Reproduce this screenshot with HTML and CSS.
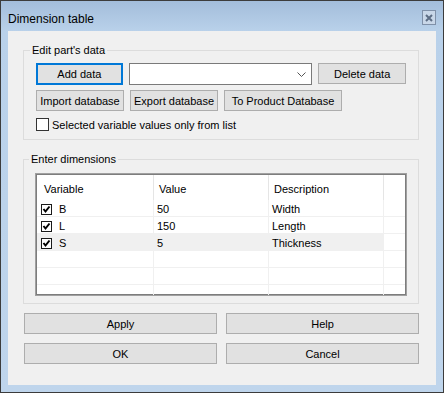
FILE: index.html
```html
<!DOCTYPE html>
<html lang="en">
<head>
  <meta charset="UTF-8">
  <title>Dimension table</title>
  <link rel="stylesheet" href="styles.css">
</head>
<body>
  <div class="window">
    <div class="titlebar">
      <span class="title">Dimension table</span>
      <span class="close">
        <svg width="14" height="15" viewBox="0 0 14 15">
          <rect x="0.5" y="0.5" width="13" height="14" fill="#c9d7e8" stroke="#7f90a8"/>
          <path d="M4 5 L10 11 M10 5 L4 11" stroke="#5d6d84" stroke-width="2"/>
        </svg>
      </span>
    </div>

    <div class="client">
      <fieldset class="group">
        <legend>Edit part's data</legend>
        <div class="row row-top">
          <button class="btn btn-default w-add">Add data</button>
          <div class="combo">
            <svg width="9" height="5" viewBox="0 0 9 5"><path d="M0.5 0.5 L4.5 4.5 L8.5 0.5" fill="none" stroke="#555"/></svg>
          </div>
          <button class="btn w-delete">Delete data</button>
        </div>
        <div class="row row-second">
          <button class="btn w-import">Import database</button>
          <button class="btn w-export">Export database</button>
          <button class="btn w-product">To Product Database</button>
        </div>
        <label class="check-line"><span class="box"></span>Selected variable values only from list</label>
      </fieldset>

      <fieldset class="group group-dims">
        <legend>Enter dimensions</legend>
        <div class="listview">
          <div class="lv-row lv-head">
            <div class="cell c1">Variable</div>
            <div class="cell c2">Value</div>
            <div class="cell c3">Description</div>
            <div class="cell c4"></div>
          </div>
          <div class="lv-row">
            <div class="cell c1"><svg class="tick" width="11" height="11" viewBox="0 0 11 11"><rect x="0.5" y="0.5" width="10" height="10" fill="#fff" stroke="#1a1a1a"/><path d="M2.5 5 L4.5 7.5 L8.5 2.5" fill="none" stroke="#000" stroke-width="2"/></svg>B</div>
            <div class="cell c2">50</div>
            <div class="cell c3">Width</div>
            <div class="cell c4"></div>
          </div>
          <div class="lv-row">
            <div class="cell c1"><svg class="tick" width="11" height="11" viewBox="0 0 11 11"><rect x="0.5" y="0.5" width="10" height="10" fill="#fff" stroke="#1a1a1a"/><path d="M2.5 5 L4.5 7.5 L8.5 2.5" fill="none" stroke="#000" stroke-width="2"/></svg>L</div>
            <div class="cell c2">150</div>
            <div class="cell c3">Length</div>
            <div class="cell c4"></div>
          </div>
          <div class="lv-row selected">
            <div class="cell c1"><svg class="tick" width="11" height="11" viewBox="0 0 11 11"><rect x="0.5" y="0.5" width="10" height="10" fill="#fff" stroke="#1a1a1a"/><path d="M2.5 5 L4.5 7.5 L8.5 2.5" fill="none" stroke="#000" stroke-width="2"/></svg>S</div>
            <div class="cell c2">5</div>
            <div class="cell c3">Thickness</div>
            <div class="cell c4"></div>
          </div>
          <div class="lv-row">
            <div class="cell c1"></div><div class="cell c2"></div><div class="cell c3"></div><div class="cell c4"></div>
          </div>
          <div class="lv-row">
            <div class="cell c1"></div><div class="cell c2"></div><div class="cell c3"></div><div class="cell c4"></div>
          </div>
          <div class="lv-row">
            <div class="cell c1"></div><div class="cell c2"></div><div class="cell c3"></div><div class="cell c4"></div>
          </div>
        </div>
      </fieldset>

      <div class="actions">
        <button class="btn">Apply</button>
        <button class="btn">Help</button>
        <button class="btn">OK</button>
        <button class="btn">Cancel</button>
      </div>
    </div>
  </div>
</body>
</html>
```

FILE: styles.css
```css
body {
  margin: 0;
  font-family: "Liberation Sans", Arial, sans-serif;
  font-size: 11px;
  color: #000;
}
.window {
  width: 444px;
  height: 393px;
  box-sizing: border-box;
  border: 1px solid #3c3c3c;
  padding: 0 7px 7px;
  background: linear-gradient(#a3bddb, #b9d1ea 30px, #bfd5ec);
  display: flex;
  flex-direction: column;
}
.titlebar {
  height: 30px;
  display: flex;
  align-items: center;
  justify-content: space-between;
}
.title {
  font-size: 12px;
  padding-top: 6px;
}
.close {
  display: flex;
  margin-top: 2px;
}
.client {
  height: 354px;
  box-sizing: border-box;
  background: #f0f0f0;
  padding-top: 13px;
}
.group {
  margin: 0 17px 0 15px;
  border: 1px solid #dcdcdc;
  padding: 6px 12px 8px;
  min-width: 0;
}
legend {
  padding: 0 2px;
  margin-left: -6px;
  line-height: 13px;
}
.row {
  display: flex;
  gap: 6px;
}
.row-top {
  height: 22px;
}
.row-second {
  height: 21px;
  margin-top: 5px;
}
.btn {
  font: inherit;
  color: #000;
  background: #e1e1e1;
  border: 1px solid #adadad;
  padding: 0;
  height: 100%;
  box-sizing: border-box;
}
.btn-default {
  border: 2px solid #0078d7;
}
.w-add { width: 87px; }
.w-delete { width: 88px; height: 21px; }
.w-import { width: 88px; }
.w-export { width: 88px; }
.w-product { width: 118px; }
.combo {
  width: 184px;
  box-sizing: border-box;
  background: #fff;
  border: 1px solid #7a7a7a;
  display: flex;
  align-items: center;
  justify-content: flex-end;
  padding-right: 5px;
}
.check-line {
  display: flex;
  align-items: center;
  gap: 3px;
  height: 13px;
  margin-top: 7px;
}
.box {
  width: 13px;
  height: 13px;
  box-sizing: border-box;
  border: 1px solid #333;
  background: #fff;
}
.group-dims {
  margin-top: 13px;
  padding: 7px 11px 7px;
}
.listview {
  height: 123px;
  box-sizing: border-box;
  border: 1px solid #a0a0a0;
  box-shadow: inset 0 0 0 1px #7d7d7d;
  padding: 1px;
  background: #fff;
  overflow: hidden;
}
.lv-row {
  display: grid;
  grid-template-columns: 117px 115px 115px 1fr;
  height: 17px;
}
.cell {
  box-sizing: border-box;
  display: flex;
  align-items: center;
  padding-top: 2px;
  border-right: 1px solid #f0f0f0;
  border-bottom: 1px solid #f0f0f0;
  white-space: nowrap;
}
.cell.c4 {
  border-right: none;
}
.lv-head {
  height: 25px;
}
.lv-head .cell {
  border-bottom: none;
  border-right-color: #e5e5e5;
}
.lv-head .c1 { padding-left: 7px; }
.lv-head .c2,
.lv-head .c3 { padding-left: 5px; }
.c1 { padding-left: 4px; }
.c2, .c3 { padding-left: 3px; }
.tick {
  margin-right: 7px;
}
.selected .c1,
.selected .c2,
.selected .c3 {
  background: #f0f0f0;
}
.actions {
  display: grid;
  grid-template-columns: 193px 193px;
  grid-auto-rows: 21px;
  gap: 9px;
  margin: 9px 17px 0 16px;
}
```
